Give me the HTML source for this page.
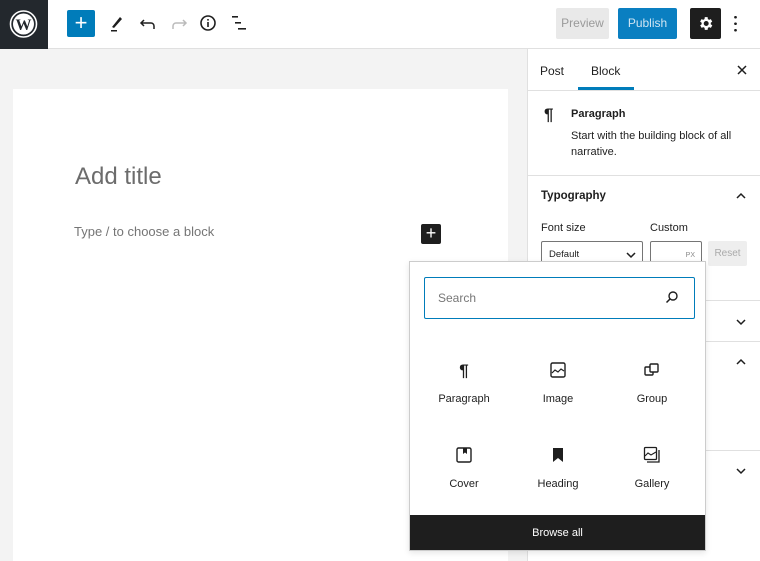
<!DOCTYPE html>
<html><head><style>
*{box-sizing:border-box;margin:0;padding:0}
body{width:760px;height:561px;overflow:hidden;font-family:"Liberation Sans",sans-serif;color:#1e1e1e;background:#fff;position:relative;font-size:13px}
.abs{position:absolute}
.top{left:0;top:0;width:760px;height:49px;border-bottom:1px solid #e0e0e0;background:#fff}
.logo{left:0;top:0;width:48px;height:49px;background:#23282d}
.ed{left:0;top:49px;width:527px;height:512px;background:#f3f3f3}
.canvas{left:13px;top:89px;width:495px;height:472px;background:#fff}
.side{left:527px;top:49px;width:233px;height:512px;background:#fff;border-left:1px solid #e0e0e0}
.hr{position:absolute;left:0;width:233px;height:1px;background:#e0e0e0}
.pop{left:409px;top:261px;width:297px;height:290px;background:#fff;border:1px solid #ccc;box-shadow:0 2px 6px rgba(0,0,0,.1)}
.item{position:absolute;width:94px;text-align:center;font-size:11px}
.item svg{display:block;margin:0 auto 14px}
.chev{position:absolute;left:208px}
</style></head><body>
<div class="abs top"></div>
<div class="abs logo"><svg width="48" height="49" viewBox="0 0 48 49"><circle cx="23.5" cy="24" r="13" fill="none" stroke="#fff" stroke-width="1.6"/><circle cx="23.5" cy="24" r="10.5" fill="#fff"/><text x="23.5" y="30" font-size="16" font-weight="bold" text-anchor="middle" fill="#23282d" font-family="Liberation Serif">W</text></svg></div>
<div class="abs" style="left:67px;top:10px;width:28px;height:27px;background:#007cba;border-radius:2px;color:#fff;font-size:22px;line-height:26px;text-align:center">+</div>
<svg class="abs" style="left:106px;top:12px" width="22" height="22" viewBox="0 0 22 22"><path d="M6 15 L14 5 L16 7 L8 16Z" fill="#1e1e1e"/><rect x="5" y="18" width="6" height="1.5" fill="#1e1e1e"/></svg>
<svg class="abs" style="left:137px;top:12px" width="22" height="22" viewBox="0 0 22 22"><path d="M7 8 L4 11 L7 14 M4 11 H14 a3 3 0 0 1 3 3 V17" fill="none" stroke="#1e1e1e" stroke-width="1.5"/></svg>
<svg class="abs" style="left:168px;top:12px" width="22" height="22" viewBox="0 0 22 22"><path d="M15 8 L18 11 L15 14 M18 11 H8 a3 3 0 0 0 -3 3 V17" fill="none" stroke="#bbb" stroke-width="1.5"/></svg>
<svg class="abs" style="left:198px;top:13px" width="20" height="20" viewBox="0 0 20 20"><circle cx="10" cy="10" r="7" fill="none" stroke="#1e1e1e" stroke-width="1.6"/><rect x="9.2" y="9" width="1.6" height="5" fill="#1e1e1e"/><rect x="9.2" y="6" width="1.6" height="1.6" fill="#1e1e1e"/></svg>
<svg class="abs" style="left:229px;top:13px" width="20" height="20" viewBox="0 0 20 20"><rect x="3" y="3" width="6" height="1.6" fill="#1e1e1e"/><rect x="6" y="9" width="6" height="1.6" fill="#1e1e1e"/><rect x="9" y="15" width="8" height="1.6" fill="#1e1e1e"/></svg>
<div class="abs" style="left:556px;top:8px;width:53px;height:31px;background:#e9e9e9;border-radius:2px;color:#9a9a9a;font-size:12px;line-height:31px;text-align:center">Preview</div>
<div class="abs" style="left:618px;top:8px;width:59px;height:31px;background:#0a7fc1;border-radius:2px;color:#cfe4f2;font-size:12px;line-height:31px;text-align:center">Publish</div>
<div class="abs" style="left:690px;top:8px;width:31px;height:31px;background:#1e1e1e;border-radius:2px"></div>
<svg class="abs" style="left:697px;top:15px" width="17" height="17" viewBox="0 0 24 24"><path fill="#fff" d="M19.4 13a7.5 7.5 0 0 0 0-2l2.1-1.6-2-3.5-2.5 1a7 7 0 0 0-1.700-1L15 3h-4l-.4 2.9a7 7 0 0 0-1.7 1l-2.5-1-2 3.5L6.6 11a7.5 7.5 0 0 0 0 2l-2.1 1.6 2 3.5 2.5-1a7 7 0 0 0 1.7 1L11 21h4l.4-2.9a7 7 0 0 0 1.7-1l2.5 1 2-3.5zM13 15.5a3.5 3.5 0 1 1 0-7 3.5 3.5 0 0 1 0 7z"/></svg>
<div class="abs" style="left:734px;top:14px;width:3px;height:20px;background:radial-gradient(circle,#1e1e1e 1.2px,transparent 1.5px) 0 0/3px 6.5px"></div>

<div class="abs ed"></div>
<div class="abs canvas"></div>
<div class="abs" style="left:75px;top:163px;font-size:24px;color:#6c6c6c">Add title</div>
<div class="abs" style="left:74px;top:224px;font-size:13px;color:#757575">Type / to choose a block</div>
<div class="abs" style="left:421px;top:224px;width:20px;height:20px;background:#1e1e1e;border-radius:2px;color:#fff;font-size:18px;line-height:19px;text-align:center">+</div>

<div class="abs side">
<div class="abs" style="left:12px;top:15px;font-size:12px">Post</div>
<div class="abs" style="left:63px;top:15px;font-size:12px">Block</div>
<div class="abs" style="left:50px;top:38px;width:56px;height:3px;background:#007cba"></div>
<svg class="abs" style="left:209px;top:16px" width="10" height="10" viewBox="0 0 10 10"><path d="M1 1 L9 9 M9 1 L1 9" stroke="#1e1e1e" stroke-width="1.5"/></svg>
<div class="hr" style="top:41px"></div>
<div class="abs" style="left:16px;top:56px;font-size:17px;font-weight:bold">¶</div>
<div class="abs" style="left:43px;top:59px;font-size:11px;font-weight:bold">Paragraph</div>
<div class="abs" style="left:43px;top:80px;font-size:11px;line-height:15.5px;width:185px">Start with the building block of all narrative.</div>
<div class="hr" style="top:126px"></div>
<div class="abs" style="left:13px;top:141px;font-size:11.5px;font-weight:bold">Typography</div>
<svg class="chev" style="top:143px" width="10" height="7" viewBox="0 0 10 7"><path d="M1 6 L5 2 L9 6" fill="none" stroke="#1e1e1e" stroke-width="1.5"/></svg>
<div class="abs" style="left:13px;top:173px;font-size:11px">Font size</div>
<div class="abs" style="left:122px;top:173px;font-size:11px">Custom</div>
<div class="abs" style="left:13px;top:192px;width:102px;height:30px;border:1px solid #757575;border-radius:2px;font-size:9.5px;padding:7px 7px">Default</div>
<svg class="abs" style="left:98px;top:203px" width="10" height="7" viewBox="0 0 10 7"><path d="M1 1 L5 5 L9 1" fill="none" stroke="#1e1e1e" stroke-width="1.5"/></svg>
<div class="abs" style="left:122px;top:192px;width:52px;height:30px;border:1px solid #757575;border-radius:2px;font-size:7px;color:#888;text-align:right;padding:10px 6px">PX</div>
<div class="abs" style="left:180px;top:192px;width:39px;height:25px;background:#eee;color:#aaa;font-size:10px;text-align:center;line-height:25px;border-radius:2px">Reset</div>
<div class="hr" style="top:251px"></div>
<svg class="chev" style="top:270px" width="10" height="7" viewBox="0 0 10 7"><path d="M1 1 L5 5 L9 1" fill="none" stroke="#1e1e1e" stroke-width="1.5"/></svg>
<div class="hr" style="top:292px"></div>
<svg class="chev" style="top:309px" width="10" height="7" viewBox="0 0 10 7"><path d="M1 6 L5 2 L9 6" fill="none" stroke="#1e1e1e" stroke-width="1.5"/></svg>
<div class="hr" style="top:401px"></div>
<svg class="chev" style="top:419px" width="10" height="7" viewBox="0 0 10 7"><path d="M1 1 L5 5 L9 1" fill="none" stroke="#1e1e1e" stroke-width="1.5"/></svg>
</div>

<div class="abs pop">
<div class="abs" style="left:14px;top:15px;width:271px;height:42px;border:1.5px solid #007cba;border-radius:2px;font-size:12px;color:#777;padding:13px 13px">Search</div>
<svg class="abs" style="left:255px;top:28px" width="14" height="14" viewBox="0 0 14 14"><circle cx="8" cy="6" r="4" fill="none" stroke="#1e1e1e" stroke-width="1.4"/><path d="M5 9 L1.5 12.5" stroke="#1e1e1e" stroke-width="1.5"/></svg>
<div class="item" style="left:7px;top:99px"><svg width="18" height="18" viewBox="0 0 18 18"><text x="9" y="15" text-anchor="middle" font-size="17" font-weight="bold" fill="#1e1e1e">¶</text></svg>Paragraph</div>
<div class="item" style="left:101px;top:99px"><svg width="18" height="18" viewBox="0 0 18 18"><rect x="2" y="2" width="14" height="14" rx="1.5" fill="none" stroke="#1e1e1e" stroke-width="1.4"/><path d="M3 12 L6 9 L9 11 L12 8 L15 10" fill="none" stroke="#1e1e1e" stroke-width="1.2"/></svg>Image</div>
<div class="item" style="left:195px;top:99px"><svg width="18" height="18" viewBox="0 0 18 18"><rect x="2" y="6" width="8" height="8" rx="1" fill="none" stroke="#1e1e1e" stroke-width="1.4"/><rect x="7" y="3" width="8" height="8" rx="1" fill="#fff" stroke="#1e1e1e" stroke-width="1.4"/></svg>Group</div>
<div class="item" style="left:7px;top:184px"><svg width="18" height="18" viewBox="0 0 18 18"><rect x="2" y="2" width="14" height="14" rx="1.5" fill="none" stroke="#1e1e1e" stroke-width="1.4"/><path d="M8 2 V8 L10 6.5 L12 8 V2Z" fill="#1e1e1e"/></svg>Cover</div>
<div class="item" style="left:101px;top:184px"><svg width="18" height="18" viewBox="0 0 18 18"><path d="M4 2 H14 V16 L9 12 L4 16Z" fill="#1e1e1e"/></svg>Heading</div>
<div class="item" style="left:195px;top:184px"><svg width="18" height="18" viewBox="0 0 18 18"><rect x="1.5" y="1.5" width="12" height="12" rx="1" fill="none" stroke="#1e1e1e" stroke-width="1.3"/><path d="M2 10 L5 7 L8 9 L13 6" fill="none" stroke="#1e1e1e" stroke-width="1.1"/><path d="M16 4 V16 H4" fill="none" stroke="#1e1e1e" stroke-width="1.3"/></svg>Gallery</div>
<div class="abs" style="left:0;top:253px;width:295px;height:35px;background:#1e1e1e;color:#fff;font-size:11px;text-align:center;line-height:37px">Browse all</div>
</div>
</body></html>
